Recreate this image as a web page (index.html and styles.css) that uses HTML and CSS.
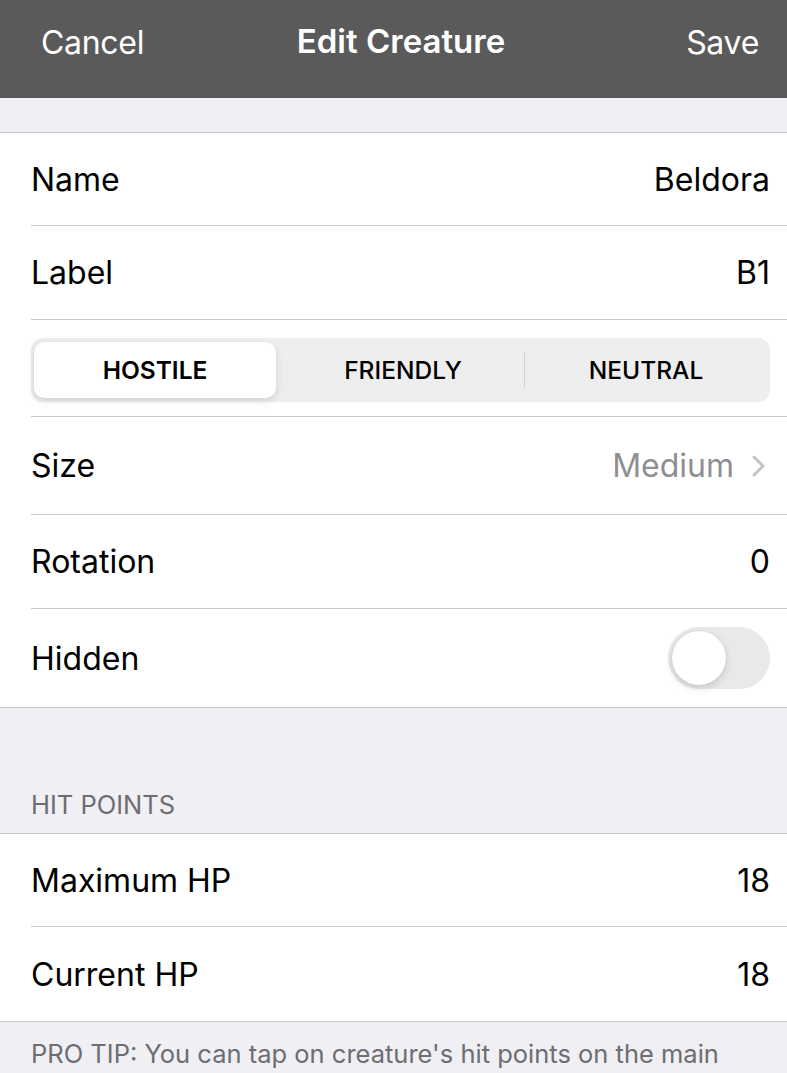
FILE: index.html
```html
<!DOCTYPE html>
<html>
<head>
<meta charset="utf-8">
<link rel="stylesheet" href="styles.css">
</head>
<body>
<header class="nav">
  <span class="nav-btn">Cancel</span>
  <span class="nav-title">Edit Creature</span>
  <span class="nav-btn">Save</span>
</header>
<div class="spacer-top"></div>
<section class="group">
  <div class="row r93"><span class="label">Name</span><span class="value">Beldora</span></div>
  <div class="row"><span class="label">Label</span><span class="value">B1</span></div>
  <div class="row row-seg">
    <div class="seg">
      <div class="seg-item seg-active">HOSTILE</div>
      <div class="seg-item">FRIENDLY</div>
      <div class="seg-div"></div>
      <div class="seg-item">NEUTRAL</div>
    </div>
  </div>
  <div class="row r98"><span class="label">Size</span><span class="value muted">Medium<svg class="chev" width="14" height="24" viewBox="0 0 14 24"><path d="M2 3 L11 12 L2 21" fill="none" stroke="#c4c4c7" stroke-width="3" stroke-linecap="round" stroke-linejoin="round"/></svg></span></div>
  <div class="row"><span class="label">Rotation</span><span class="value">0</span></div>
  <div class="row r98 last"><span class="label">Hidden</span><span class="toggle"><span class="knob"></span></span></div>
</section>
<div class="section-head">HIT POINTS</div>
<section class="group">
  <div class="row r93"><span class="label">Maximum HP</span><span class="value">18</span></div>
  <div class="row last"><span class="label">Current HP</span><span class="value">18</span></div>
</section>
<div class="footer-note">PRO TIP: You can tap on creature's hit points on the main</div>
</body>
</html>
```
FILE: styles.css
```css
html, body {
  margin: 0;
  padding: 0;
}
body {
  background: #efeff4;
  font-family: Inter, "Liberation Sans", sans-serif;
  width: 787px;
  height: 1073px;
  overflow: hidden;
}
.nav {
  height: 98px;
  background: #5a5a5a;
  color: #fff;
  display: flex;
  align-items: center;
  justify-content: space-between;
  padding: 0 28px 14px 41px;
  box-sizing: border-box;
  position: relative;
}
.nav-btn {
  font-size: 32px;
  letter-spacing: -0.3px;
}
.nav-title {
  position: absolute;
  left: 0;
  right: 0;
  top: 21px;
  text-align: center;
  font-size: 33px;
  font-weight: 600;
  padding-left: 15px;
}
.spacer-top {
  height: 35px;
  border-bottom: 1px solid #c8c7cc;
  box-sizing: border-box;
}
.group {
  background: #fff;
  padding-left: 31px;
  border-bottom: 1px solid #c8c7cc;
}
.row {
  height: 94px;
  display: flex;
  align-items: center;
  justify-content: space-between;
  padding-right: 17px;
  border-bottom: 1px solid #c8c7cc;
  box-sizing: border-box;
}
.row.r93 {
  height: 93px;
}
.row.r98 {
  height: 98px;
}
.row.last {
  border-bottom: none;
}
.label, .value {
  font-size: 32px;
  color: #000;
}
.value.muted {
  color: #8e8e93;
  display: flex;
  align-items: center;
  gap: 18px;
  margin-right: 4px;
}
.row-seg {
  height: 97px;
  padding-top: 4px;
}
.seg {
  flex: 1;
  height: 64px;
  background: #eeeeef;
  border-radius: 12px;
  display: flex;
  align-items: center;
  padding: 0 3px;
  box-sizing: border-box;
}
.seg-item {
  flex: 1;
  height: 56px;
  display: flex;
  align-items: center;
  justify-content: center;
  font-size: 24.5px;
  font-weight: 500;
  color: #000;
}
.seg-active {
  font-weight: 600;
  background: #fff;
  border-radius: 10px;
  margin-right: 6px;
  box-shadow: 0 3px 8px rgba(0,0,0,0.12), 0 0 1px rgba(0,0,0,0.08);
}
.seg-div {
  width: 1px;
  height: 36px;
  background: #d0d0d3;
}
.toggle {
  width: 102px;
  height: 62px;
  border-radius: 31px;
  background: #e9e9ea;
  display: flex;
  align-items: center;
  padding-left: 4px;
  box-sizing: border-box;
}
.knob {
  width: 54px;
  height: 54px;
  border-radius: 50%;
  background: #fff;
  box-shadow: 0 3px 8px rgba(0,0,0,0.15), 0 0 1px rgba(0,0,0,0.15);
}
.section-head {
  height: 126px;
  box-sizing: border-box;
  padding: 81px 0 0 31px;
  font-size: 25.5px;
  color: #6d6d72;
  border-bottom: 1px solid #c8c7cc;
}
.footer-note {
  padding: 16px 0 0 31px;
  font-size: 25.5px;
  color: #6d6d72;
  white-space: nowrap;
}
```
